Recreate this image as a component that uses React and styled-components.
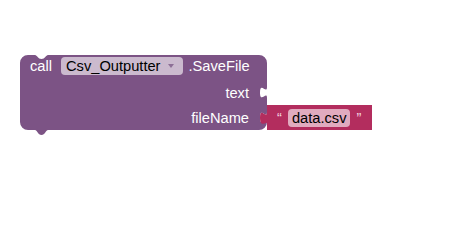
import React from "react";
import styled, { createGlobalStyle } from "styled-components";

const PURPLE = "#7c5385";
const PINK = "#b32d5e";

const GlobalStyle = createGlobalStyle`
  html, body { margin: 0; padding: 0; background: #ffffff; }
  body { font-family: "Liberation Sans", Arial, sans-serif; }
`;

const Workspace = styled.div`
  position: relative;
  width: 466px;
  height: 245px;
  overflow: hidden;
  background: #ffffff;
`;

const BlockRoot = styled.div`
  position: absolute;
  left: ${(p) => p.$x}px;
  top: ${(p) => p.$y}px;
  width: 247px;
  display: flex;
  flex-direction: column;
  font-family: "Liberation Sans", Arial, sans-serif;
  font-size: 11pt;
  color: #ffffff;
  white-space: nowrap;
`;

const Shape = styled.svg`
  position: absolute;
  left: 0;
  top: 0;
  overflow: visible;
  z-index: 0;
  pointer-events: none;
`;

const HeaderRow = styled.div`
  position: relative;
  z-index: 1;
  display: flex;
  align-items: center;
  height: 25px;
  box-sizing: border-box;
  padding: 0 0 4px 10px;
`;

const InputRow = styled.div`
  position: relative;
  z-index: 1;
  display: flex;
  align-items: center;
  height: 25px;
`;

const InputLabel = styled.div`
  width: 247px;
  box-sizing: border-box;
  padding-right: 18px;
  text-align: right;
  flex-shrink: 0;
`;

const Label = styled.span`
  margin-left: ${(p) => p.$ml || 0}px;
`;

const Dropdown = styled.span`
  display: inline-flex;
  align-items: center;
  gap: 7px;
  height: 18px;
  margin-left: 9px;
  padding: 0 9px 0 5px;
  border-radius: 4px;
  background: #cbbace;
  color: #000000;
`;

const Arrow = styled.span`
  width: 0;
  height: 0;
  margin-top: 1px;
  border-left: 3px solid transparent;
  border-right: 3px solid transparent;
  border-top: 4px solid #8d6f96;
`;

const StringBlock = styled.div`
  position: relative;
  width: 105px;
  height: 25px;
  flex-shrink: 0;
`;

const StringContent = styled.div`
  position: relative;
  z-index: 1;
  display: flex;
  align-items: center;
  gap: 6px;
  height: 25px;
  padding-left: 10px;
`;

const Quote = styled.span`
  color: #f3d6e0;
`;

const TextField = styled.span`
  display: inline-flex;
  align-items: center;
  height: 18px;
  padding: 0 4px;
  border-radius: 4px;
  background: #e1abbf;
  color: #000000;
`;

const MAIN_PATH =
  "M0,8 A8,8 0 0 1 8,0 H15 c2,0 3,4 6.5,4 s4.5,-4 6.5,-4 H239 A8,8 0 0 1 247,8 " +
  "V32 c0,8 -7,-6 -7,5.5 s7,-2 7,5.5 V57 c0,8 -7,-6 -7,5.5 s7,-2 7,5.5 " +
  "V67 A8,8 0 0 1 239,75 H28 c-2,0 -3,5 -6.5,5 s-4.5,-5 -6.5,-5 H8 A8,8 0 0 1 0,67 Z";

const STRING_PATH =
  "M0,0 H105 V25 H0 V18 c0,-2 -7,6 -7,-5.5 c0,-11.5 7,2.5 7,-5.5 Z";

function TextBlock({ value }) {
  return (
    <StringBlock>
      <Shape width="105" height="25">
        <path d={STRING_PATH} fill={PINK} />
      </Shape>
      <StringContent>
        <Quote>“</Quote>
        <TextField>{value}</TextField>
        <Quote>”</Quote>
      </StringContent>
    </StringBlock>
  );
}

function CallBlock() {
  return (
    <BlockRoot $x={20} $y={55}>
      <Shape width="247" height="80">
        <path d={MAIN_PATH} fill={PURPLE} />
      </Shape>
      <HeaderRow>
        <Label>call</Label>
        <Dropdown>
          Csv_Outputter
          <Arrow />
        </Dropdown>
        <Label $ml={6}>.SaveFile</Label>
      </HeaderRow>
      <InputRow>
        <InputLabel>text</InputLabel>
      </InputRow>
      <InputRow>
        <InputLabel>fileName</InputLabel>
        <TextBlock value="data.csv" />
      </InputRow>
    </BlockRoot>
  );
}

export default function App() {
  return (
    <>
      <GlobalStyle />
      <Workspace>
        <CallBlock />
      </Workspace>
    </>
  );
}
